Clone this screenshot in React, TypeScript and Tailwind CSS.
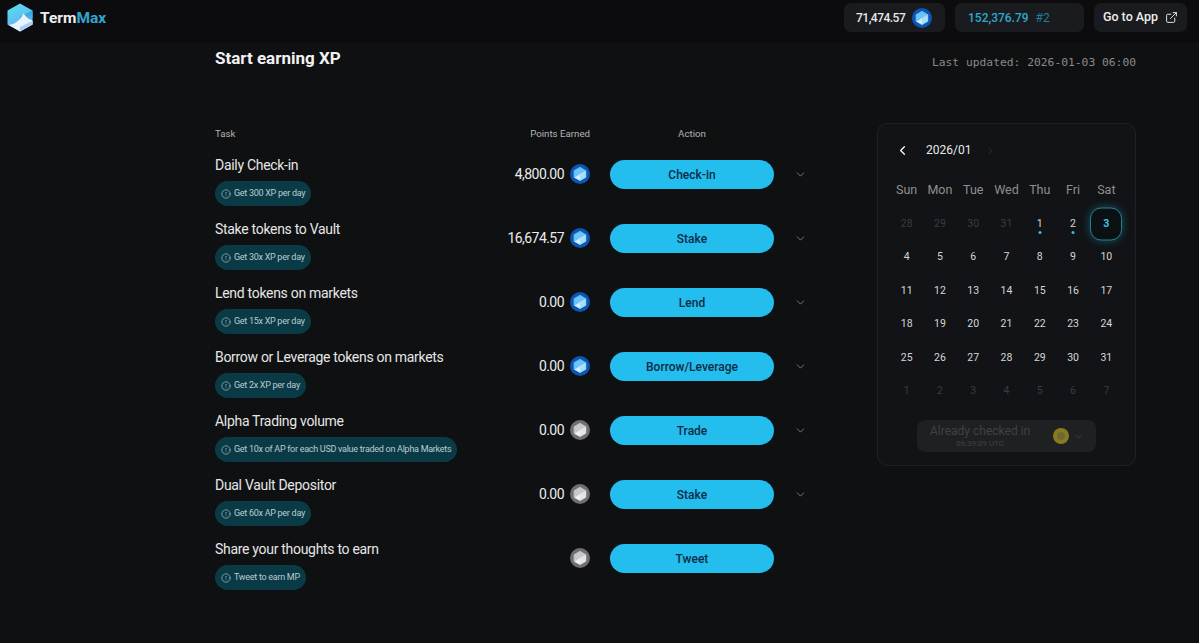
import { ChevronDown, ChevronLeft, ChevronRight, CircleAlert, ExternalLink } from 'lucide-react';

const tasks = [
  { title: 'Daily Check-in', hint: 'Get 300 XP per day', points: '4,800.00', coin: 'blue', action: 'Check-in', more: true },
  { title: 'Stake tokens to Vault', hint: 'Get 30x XP per day', points: '16,674.57', coin: 'blue', action: 'Stake', more: true },
  { title: 'Lend tokens on markets', hint: 'Get 15x XP per day', points: '0.00', coin: 'blue', action: 'Lend', more: true },
  { title: 'Borrow or Leverage tokens on markets', hint: 'Get 2x XP per day', points: '0.00', coin: 'blue', action: 'Borrow/Leverage', more: true },
  { title: 'Alpha Trading volume', hint: 'Get 10x of AP for each USD value traded on Alpha Markets', points: '0.00', coin: 'gray', action: 'Trade', more: true },
  { title: 'Dual Vault Depositor', hint: 'Get 60x AP per day', points: '0.00', coin: 'gray', action: 'Stake', more: true },
  { title: 'Share your thoughts to earn', hint: 'Tweet to earn MP', points: '', coin: 'gray', action: 'Tweet', more: false },
];

const weeks = [
  ['28', '29', '30', '31', '1', '2', '3'],
  ['4', '5', '6', '7', '8', '9', '10'],
  ['11', '12', '13', '14', '15', '16', '17'],
  ['18', '19', '20', '21', '22', '23', '24'],
  ['25', '26', '27', '28', '29', '30', '31'],
  ['1', '2', '3', '4', '5', '6', '7'],
];

function Logo() {
  return (
    <svg width="26" height="29" viewBox="0 0 26 29">
      <defs>
        <linearGradient id="logoLeft" x1="0" y1="0" x2="0.4" y2="1">
          <stop offset="0" stopColor="#58e0ee" />
          <stop offset="1" stopColor="#62aef2" />
        </linearGradient>
        <linearGradient id="logoRight" x1="0" y1="0" x2="0" y2="1">
          <stop offset="0" stopColor="#22a8e4" />
          <stop offset="1" stopColor="#8fb8f4" />
        </linearGradient>
      </defs>
      <path d="M13 0.5L25.5 7.5V21.5L13 28.5L0.5 21.5V7.5Z" fill="url(#logoLeft)" strokeLinejoin="round" />
      <path d="M25.5 7.5V15L13 24V13.5Z" fill="url(#logoRight)" />
      <path d="M4 21.5C9 20.5 14 16 16.5 10.5C19 14 22 16.5 25.5 17.5V21.5L13 28.5L1.5 22Z" fill="#e8f3fb" />
      <path d="M13 28.5L25.5 21.5V18L13 24Z" fill="#a9cdf6" />
    </svg>
  );
}

function Coin({ kind, size = 20 }: { kind: string; size?: number }) {
  const gray = kind === 'gray';
  return (
    <svg width={size} height={size} viewBox="0 0 20 20" className="shrink-0">
      <circle cx="10" cy="10" r="10" fill={gray ? '#6f6f72' : '#0c55b4'} />
      <path d="M10 3.4L15.8 6.7V13.3L10 16.6L4.2 13.3V6.7Z" fill={gray ? '#c9c9cb' : '#6cc4f4'} stroke={gray ? '#c9c9cb' : '#6cc4f4'} strokeLinejoin="round" />
      <path d="M10 9.8L15.8 6.7V13.3L10 16.6Z" fill={gray ? '#e4e4e6' : '#a8def9'} />
      <path d="M4.2 13.3C6.8 12.8 9 11.2 10 9.8L10 16.6Z" fill={gray ? '#f2f2f3' : '#d4effc'} />
    </svg>
  );
}

function TaskRow({ task }: { task: (typeof tasks)[number] }) {
  return (
    <div className="flex h-[64px] items-start">
      <div className="w-[285px] shrink-0">
        <div className="whitespace-nowrap text-[14px] leading-[20px] tracking-[-0.3px] text-[#e6e6e6]">{task.title}</div>
        <div className="mt-[6px] flex h-[25px] w-fit items-center gap-[3px] whitespace-nowrap rounded-full bg-[#0b3a47] pl-[6px] pr-[6px] text-[9px] tracking-[-0.28px] text-[#b9ccd0]">
          <CircleAlert size={10} strokeWidth={1.5} className="shrink-0" />
          {task.hint}
        </div>
      </div>
      <div className="flex h-[38px] w-[90px] shrink-0 items-center justify-end gap-[6px] text-[14px] tracking-[-0.55px] text-[#ececec]">
        {task.points && <span>{task.points}</span>}
        <Coin kind={task.coin} />
      </div>
      <button className="ml-[20px] mt-[5px] flex h-[29px] w-[164px] items-center justify-center rounded-full bg-[#23bdee] text-[12px] font-medium text-[#0d2c45]">
        {task.action}
      </button>
      {task.more && <ChevronDown size={13} strokeWidth={1.5} className="ml-[20px] mt-[13px] text-[#8c8c8c]" />}
    </div>
  );
}

function Calendar() {
  return (
    <aside className="relative h-[343px] w-[259px] rounded-[10px] border border-[#1f2224] bg-[#111316] px-[12px] pt-[16px]">
      <div className="flex h-[20px] items-center pl-[5px] text-[12px] text-[#e8e8e8]">
        <ChevronLeft size={15} strokeWidth={2} className="text-white" />
        <span className="ml-[16px]">2026/01</span>
        <ChevronRight size={11} strokeWidth={2} className="ml-[14px] text-[#33363a]" />
      </div>
      <div className="mt-[20px] grid grid-cols-7 text-center text-[12.5px] text-[#8f8f8f]">
        {['Sun', 'Mon', 'Tue', 'Wed', 'Thu', 'Fri', 'Sat'].map((d) => (
          <div key={d} className="h-[20px] leading-[20px]">{d}</div>
        ))}
      </div>
      <div className="mt-[7px] grid grid-cols-7 text-center text-[10.5px]">
        {weeks.map((week, w) =>
          week.map((day, i) => {
            const faded = w === 0 ? i < 4 : w === 5;
            const today = w === 0 && i === 6;
            const dot = w === 0 && (i === 4 || i === 5);
            return (
              <div key={`${w}-${i}`} className="relative flex h-[33.5px] items-center justify-center">
                {today && <div className="absolute left-1/2 top-1/2 h-[33px] w-[32px] -translate-x-1/2 -translate-y-1/2 rounded-[11px] border border-[#2d7f8e] bg-[#0b1113] shadow-[0_0_8px_#155566]" />}
                <span className={`relative ${today ? 'font-bold text-[#3cc4e4]' : faded ? 'text-[#3a3c3f]' : 'text-[#d6d6d6]'}`}>{day}</span>
                {dot && <span className="absolute bottom-[7px] left-1/2 h-[3px] w-[3px] -translate-x-1/2 rounded-full bg-[#35c0cf]" />}
              </div>
            );
          }),
        )}
      </div>
      <div className="mx-auto mt-[12px] flex h-[32px] w-[179px] items-center rounded-[8px] bg-[#1e2122] pl-[13px] pr-[10px]">
        <div className="w-[100px] text-center text-[#3f4243]">
          <div className="whitespace-nowrap text-[12px] leading-[14px]">Already checked in</div>
          <div className="text-[8px] leading-[11px]">06:39:09 UTC</div>
        </div>
        <div className="ml-[23px] flex h-[16px] w-[16px] items-center justify-center rounded-full bg-[#8a7a1e]">
          <div className="h-[8px] w-[8px] rounded-full bg-[#6d6a35]" />
        </div>
        <ChevronDown size={11} strokeWidth={2} className="ml-[4px] text-[#3f4243]" />
      </div>
    </aside>
  );
}

export default function App() {
  return (
    <div className="h-[643px] w-[1199px] overflow-hidden bg-[#0f1012] font-['Roboto',sans-serif]">
      <header className="flex h-[43px] items-start bg-[#0c0c0e] pl-[7px] pr-[12px] pt-[3px]">
        <Logo />
        <div className="ml-[7px] mt-[4px] text-[15.5px] font-bold">
          <span className="text-[#eeeeee]">Term</span>
          <span className="text-[#2fa6cf]">Max</span>
        </div>
        <div className="ml-auto flex items-center text-[12px] font-medium">
          <div className="flex h-[29px] w-[101px] items-center gap-[7px] rounded-[7px] bg-[#1a1b1e] pl-[12px] tracking-[-0.5px] text-[#e8e8e8]">
            71,474.57
            <Coin kind="blue" />
          </div>
          <div className="ml-[10px] flex h-[29px] w-[129px] items-center gap-[7px] rounded-[7px] bg-[#1a1b1e] pl-[13px] text-[#2ea8cf]">
            152,376.79
            <span className="font-normal text-[#1f7f9b]">#2</span>
          </div>
          <div className="ml-[10px] flex h-[29px] w-[93px] items-center justify-center gap-[7px] rounded-[7px] bg-[#1a1b1e] text-[12.5px] text-[#ececec]">
            Go to App
            <ExternalLink size={13} strokeWidth={1.75} />
          </div>
        </div>
      </header>

      <main className="pl-[215px] pr-[63px]">
        <div className="flex items-start justify-between">
          <h1 className="mt-[4px] text-[17px] font-bold leading-[22px] text-[#f2f2f2]">Start earning XP</h1>
          <div className="mt-[12px] whitespace-nowrap font-['DejaVu_Sans_Mono',monospace] text-[11.3px] leading-[16px] text-[#8a8a8a]">
            Last updated: 2026-01-03 06:00
          </div>
        </div>

        <div className="mt-[52px] flex items-start justify-between">
          <div className="pt-[4px]">
            <div className="flex h-[28px] text-[9.7px] leading-[14px] text-[#b4b4b4]">
              <span className="w-[375px] relative">
                Task
                <span className="absolute right-0 top-0">Points Earned</span>
              </span>
              <span className="ml-[20px] w-[164px] text-center">Action</span>
            </div>
            {tasks.map((task) => (
              <TaskRow key={task.title} task={task} />
            ))}
          </div>
          <Calendar />
        </div>
      </main>
    </div>
  );
}
